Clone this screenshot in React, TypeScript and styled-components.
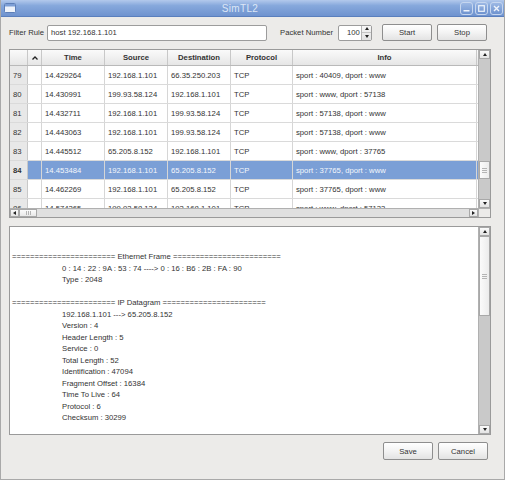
import styled, { createGlobalStyle } from 'styled-components';

const GlobalStyle = createGlobalStyle`
  html, body { margin: 0; padding: 0; background: #ecebe9; }
  body { font-family: "Liberation Sans", Arial, sans-serif; }
  * { box-sizing: border-box; }
`;

const Window = styled.div`
  width: 505px;
  height: 480px;
  display: flex;
  flex-direction: column;
  background: #ecebe9;
  border-left: 1px solid #a9a9a9;
  border-right: 1px solid #a9a9a9;
  border-bottom: 1px solid #a9a9a9;
  overflow: hidden;
`;

const TitleBar = styled.div`
  height: 17px;
  flex: none;
  display: grid;
  grid-template-columns: auto 1fr auto;
  align-items: center;
  padding: 0 1px 0 3px;
  background: linear-gradient(#b3c9ec 0%, #86a8dc 35%, #6f93cf 100%);
  border-bottom: 1px solid #5a7fbd;
`;

const TitleText = styled.div`
  text-align: center;
  font-size: 10px;
  color: #dce6f6;
  letter-spacing: 0.3px;
  padding-left: 4px;
`;

const WinButtons = styled.div`
  display: flex;
  gap: 2px;
`;

const WinButton = styled.div`
  width: 13px;
  height: 13px;
  border: 1px solid #c6d6ef;
  border-radius: 3px;
  background: linear-gradient(#9cb8e4, #6f93cf);
  display: flex;
  align-items: center;
  justify-content: center;
`;

const Body = styled.div`
  flex: 1;
  display: flex;
  flex-direction: column;
  gap: 8px;
  padding: 7px 13px 0 8px;
`;

const Toolbar = styled.div`
  display: flex;
  align-items: center;
  height: 17px;
  font-size: 7.7px;
  color: #333;
`;

const Label = styled.span<{ $gap?: number }>`
  margin-left: ${(p) => p.$gap ?? 0}px;
  white-space: nowrap;
`;

const TextField = styled.div<{ $width: number; $gap: number }>`
  width: ${(p) => p.$width}px;
  margin-left: ${(p) => p.$gap}px;
  height: 16px;
  background: #fff;
  border: 1px solid #9c9c9c;
  border-radius: 2px;
  display: flex;
  align-items: center;
  padding-left: 3px;
  font-size: 7.7px;
  color: #333;
`;

const Spinner = styled.div`
  margin-left: 5px;
  width: 34px;
  height: 16px;
  display: flex;
  background: #fff;
  border: 1px solid #9c9c9c;
  border-radius: 2px;
`;

const SpinValue = styled.div`
  flex: 1;
  display: flex;
  align-items: center;
  padding-left: 8px;
`;

const SpinArrows = styled.div`
  width: 10px;
  display: flex;
  flex-direction: column;
  border-left: 1px solid #b5b5b5;
  background: linear-gradient(#f7f7f7, #e2e2e2);
`;

const SpinHalf = styled.div`
  flex: 1;
  display: flex;
  align-items: center;
  justify-content: center;
  & + & { border-top: 1px solid #c4c4c4; }
`;

const Arrow = styled.span<{ $dir: 'up' | 'down' | 'left' | 'right' }>`
  width: 0;
  height: 0;
  border-style: solid;
  ${(p) =>
    p.$dir === 'up'
      ? 'border-width: 0 2.5px 3px 2.5px; border-color: transparent transparent #222 transparent;'
      : p.$dir === 'down'
      ? 'border-width: 3px 2.5px 0 2.5px; border-color: #222 transparent transparent transparent;'
      : p.$dir === 'left'
      ? 'border-width: 2.5px 3px 2.5px 0; border-color: transparent #222 transparent transparent;'
      : 'border-width: 2.5px 0 2.5px 3px; border-color: transparent transparent transparent #222;'}
`;

const Button = styled.div<{ $gap: number; $height?: number }>`
  width: 50px;
  height: ${(p) => p.$height ?? 17}px;
  margin-left: ${(p) => p.$gap}px;
  border: 1px solid #8e8e8e;
  border-radius: 2px;
  background: linear-gradient(#ffffff 0%, #f3f3f3 50%, #e3e3e3 100%);
  display: flex;
  align-items: center;
  justify-content: center;
  font-size: 7.7px;
  color: #333;
`;

const TablePane = styled.div`
  height: 169px;
  border: 1px solid #9a9a9a;
  background: #fff;
  display: grid;
  grid-template-columns: 1fr 12px;
  grid-template-rows: 1fr 9px;
`;

const Viewport = styled.div`
  overflow: hidden;
  font-size: 7.7px;
  color: #333;
`;

const COLS = '18px 14px 63px 63px 63px 62px 184px';

const HeaderRow = styled.div`
  display: grid;
  grid-template-columns: ${COLS};
  height: 16px;
  background: linear-gradient(#fafafa, #e6e6e6);
  border-bottom: 1px solid #b9b9b9;
`;

const HeaderCell = styled.div`
  display: flex;
  align-items: center;
  justify-content: center;
  font-weight: bold;
  border-right: 1px solid #c8c8c8;
`;

const Row = styled.div<{ $selected?: boolean }>`
  display: grid;
  grid-template-columns: ${COLS};
  height: 19px;
  border-bottom: 1px solid #dadada;
  background: ${(p) => (p.$selected ? '#7b9fd6' : '#fff')};
  color: ${(p) => (p.$selected ? '#f4f7fc' : '#333')};
`;

const Cell = styled.div`
  display: flex;
  align-items: center;
  padding-left: 3px;
  white-space: nowrap;
  overflow: hidden;
  border-right: 1px solid #d6d6d6;
`;

const NumCell = styled(Cell)<{ $selected?: boolean }>`
  background: #e8e8e8;
  color: #333;
  font-weight: ${(p) => (p.$selected ? 'bold' : 'normal')};
  border-right: 1px solid #c8c8c8;
`;

const VScroll = styled.div<{ $fixed?: boolean }>`
  display: flex;
  flex-direction: column;
  border-left: 1px solid #b0b0b0;
  background: #c9c9c9;
  ${(p) => (p.$fixed ? 'width: 12px; flex: none;' : '')}
`;

const HScroll = styled.div`
  display: flex;
  background: #dedede;
  border-top: 1px solid #b0b0b0;
`;

const Corner = styled.div`
  background: #ecebe9;
  border-top: 1px solid #b0b0b0;
  border-left: 1px solid #b0b0b0;
`;

const ScrollArrow = styled.div<{ $horizontal?: boolean }>`
  flex: none;
  ${(p) => (p.$horizontal ? 'width: 9px;' : 'height: 9px;')}
  display: flex;
  align-items: center;
  justify-content: center;
  background: linear-gradient(#fbfbfb, #e3e3e3);
  border: 1px solid #a8a8a8;
`;

const Track = styled.div<{ $size: number; $horizontal?: boolean }>`
  flex: ${(p) => p.$size} 0 0;
  background: ${(p) => (p.$horizontal ? '#e0e0e0' : '#c9c9c9')};
`;

const Thumb = styled.div<{ $size: number; $horizontal?: boolean }>`
  flex: none;
  ${(p) => (p.$horizontal ? `width: ${p.$size}px;` : `height: ${p.$size}px;`)}
  background: linear-gradient(${(p) => (p.$horizontal ? '#fbfbfb, #e8e8e8' : '90deg, #fbfbfb, #ececec')});
  border: 1px solid #a8a8a8;
  display: flex;
  align-items: center;
  justify-content: center;
  &::after {
    content: '';
    ${(p) => (p.$horizontal ? 'width: 5px; height: 4px;' : 'width: 5px; height: 5px;')}
    background: repeating-linear-gradient(
      ${(p) => (p.$horizontal ? '90deg' : '180deg')},
      #b4b4b4 0 1px,
      transparent 1px 2px
    );
  }
`;

const DetailPane = styled.div`
  height: 209px;
  border: 1px solid #9a9a9a;
  background: #fff;
  display: flex;
`;

const DetailText = styled.div`
  flex: 1;
  padding: 24px 0 0 2px;
  font-size: 7.7px;
  line-height: 11.5px;
  color: #333;
  white-space: pre;
  overflow: hidden;
`;

const Line = styled.div<{ $indent?: boolean }>`
  height: 11.5px;
  padding-left: ${(p) => (p.$indent ? 50 : 0)}px;
`;

const Footer = styled.div`
  display: flex;
  justify-content: flex-end;
  padding: 0 3px 0 0;
  margin-top: -1px;
`;

const rows = [
  ['79', '14.429264', '192.168.1.101', '66.35.250.203', 'TCP', 'sport : 40409, dport : www'],
  ['80', '14.430991', '199.93.58.124', '192.168.1.101', 'TCP', 'sport : www, dport : 57138'],
  ['81', '14.432711', '192.168.1.101', '199.93.58.124', 'TCP', 'sport : 57138, dport : www'],
  ['82', '14.443063', '192.168.1.101', '199.93.58.124', 'TCP', 'sport : 57138, dport : www'],
  ['83', '14.445512', '65.205.8.152', '192.168.1.101', 'TCP', 'sport : www, dport : 37765'],
  ['84', '14.453484', '192.168.1.101', '65.205.8.152', 'TCP', 'sport : 37765, dport : www'],
  ['85', '14.462269', '192.168.1.101', '65.205.8.152', 'TCP', 'sport : 37765, dport : www'],
  ['86', '14.574265', '199.93.58.124', '192.168.1.101', 'TCP', 'sport : www, dport : 57133'],
];

const eq = (n: number) => '='.repeat(n);

const detail: [string, boolean][] = [
  [`${eq(23)} Ethernet Frame ${eq(24)}`, false],
  ['0 : 14 : 22 : 9A : 53 : 74 ----> 0 : 16 : B6 : 2B : FA : 90', true],
  ['Type : 2048', true],
  ['', false],
  [`${eq(23)} IP Datagram ${eq(23)}`, false],
  ['192.168.1.101 ---> 65.205.8.152', true],
  ['Version : 4', true],
  ['Header Length : 5', true],
  ['Service : 0', true],
  ['Total Length : 52', true],
  ['Identification : 47094', true],
  ['Fragment Offset : 16384', true],
  ['Time To Live : 64', true],
  ['Protocol : 6', true],
  ['Checksum : 30299', true],
];

export default function App() {
  return (
    <>
      <GlobalStyle />
      <Window>
        <TitleBar>
          <svg width="12" height="10" viewBox="0 0 12 10">
            <rect x="0.5" y="0.5" width="11" height="9" rx="1" fill="#eef3fb" stroke="#5d7fb8" />
            <rect x="1" y="1" width="10" height="2.5" fill="#7d9fd6" />
          </svg>
          <TitleText>SimTL2</TitleText>
          <WinButtons>
            <WinButton>
              <svg width="7" height="7" viewBox="0 0 7 7">
                <rect x="0.5" y="5" width="6" height="1.5" fill="#eef3fb" />
              </svg>
            </WinButton>
            <WinButton>
              <svg width="7" height="7" viewBox="0 0 7 7">
                <rect x="0.7" y="0.7" width="5.6" height="5.6" fill="none" stroke="#eef3fb" strokeWidth="1.2" />
              </svg>
            </WinButton>
            <WinButton>
              <svg width="7" height="7" viewBox="0 0 7 7">
                <path d="M1 1 L6 6 M6 1 L1 6" stroke="#eef3fb" strokeWidth="1.4" />
              </svg>
            </WinButton>
          </WinButtons>
        </TitleBar>

        <Body>
          <Toolbar>
            <Label>Filter Rule</Label>
            <TextField $width={220} $gap={3}>host 192.168.1.101</TextField>
            <Label $gap={13}>Packet Number</Label>
            <Spinner>
              <SpinValue>100</SpinValue>
              <SpinArrows>
                <SpinHalf><Arrow $dir="up" /></SpinHalf>
                <SpinHalf><Arrow $dir="down" /></SpinHalf>
              </SpinArrows>
            </Spinner>
            <Button $gap={10}>Start</Button>
            <Button $gap={5}>Stop</Button>
          </Toolbar>

          <TablePane>
            <Viewport>
              <HeaderRow>
                <HeaderCell />
                <HeaderCell>
                  <svg width="6" height="4" viewBox="0 0 6 4">
                    <path d="M0.5 3.5 L3 1 L5.5 3.5" fill="none" stroke="#222" strokeWidth="1.3" />
                  </svg>
                </HeaderCell>
                <HeaderCell>Time</HeaderCell>
                <HeaderCell>Source</HeaderCell>
                <HeaderCell>Destination</HeaderCell>
                <HeaderCell>Protocol</HeaderCell>
                <HeaderCell>Info</HeaderCell>
              </HeaderRow>
              {rows.map((r) => {
                const selected = r[0] === '84';
                return (
                  <Row key={r[0]} $selected={selected}>
                    <NumCell $selected={selected}>{r[0]}</NumCell>
                    <Cell />
                    <Cell>{r[1]}</Cell>
                    <Cell>{r[2]}</Cell>
                    <Cell>{r[3]}</Cell>
                    <Cell>{r[4]}</Cell>
                    <Cell>{r[5]}</Cell>
                  </Row>
                );
              })}
            </Viewport>
            <VScroll>
              <ScrollArrow><Arrow $dir="up" /></ScrollArrow>
              <Track $size={102} />
              <Thumb $size={18} />
              <Track $size={20} />
              <ScrollArrow><Arrow $dir="down" /></ScrollArrow>
            </VScroll>
            <HScroll>
              <ScrollArrow $horizontal><Arrow $dir="left" /></ScrollArrow>
              <Thumb $size={18} $horizontal />
              <Track $size={1} $horizontal />
              <ScrollArrow $horizontal><Arrow $dir="right" /></ScrollArrow>
            </HScroll>
            <Corner />
          </TablePane>

          <DetailPane>
            <DetailText>
              {detail.map(([text, indent], i) => (
                <Line key={i} $indent={indent}>{text}</Line>
              ))}
            </DetailText>
            <VScroll $fixed>
              <ScrollArrow><Arrow $dir="up" /></ScrollArrow>
              <Thumb $size={80} />
              <Track $size={1} />
              <ScrollArrow><Arrow $dir="down" /></ScrollArrow>
            </VScroll>
          </DetailPane>

          <Footer>
            <Button $gap={0} $height={18}>Save</Button>
            <Button $gap={5} $height={18}>Cancel</Button>
          </Footer>
        </Body>
      </Window>
    </>
  );
}
